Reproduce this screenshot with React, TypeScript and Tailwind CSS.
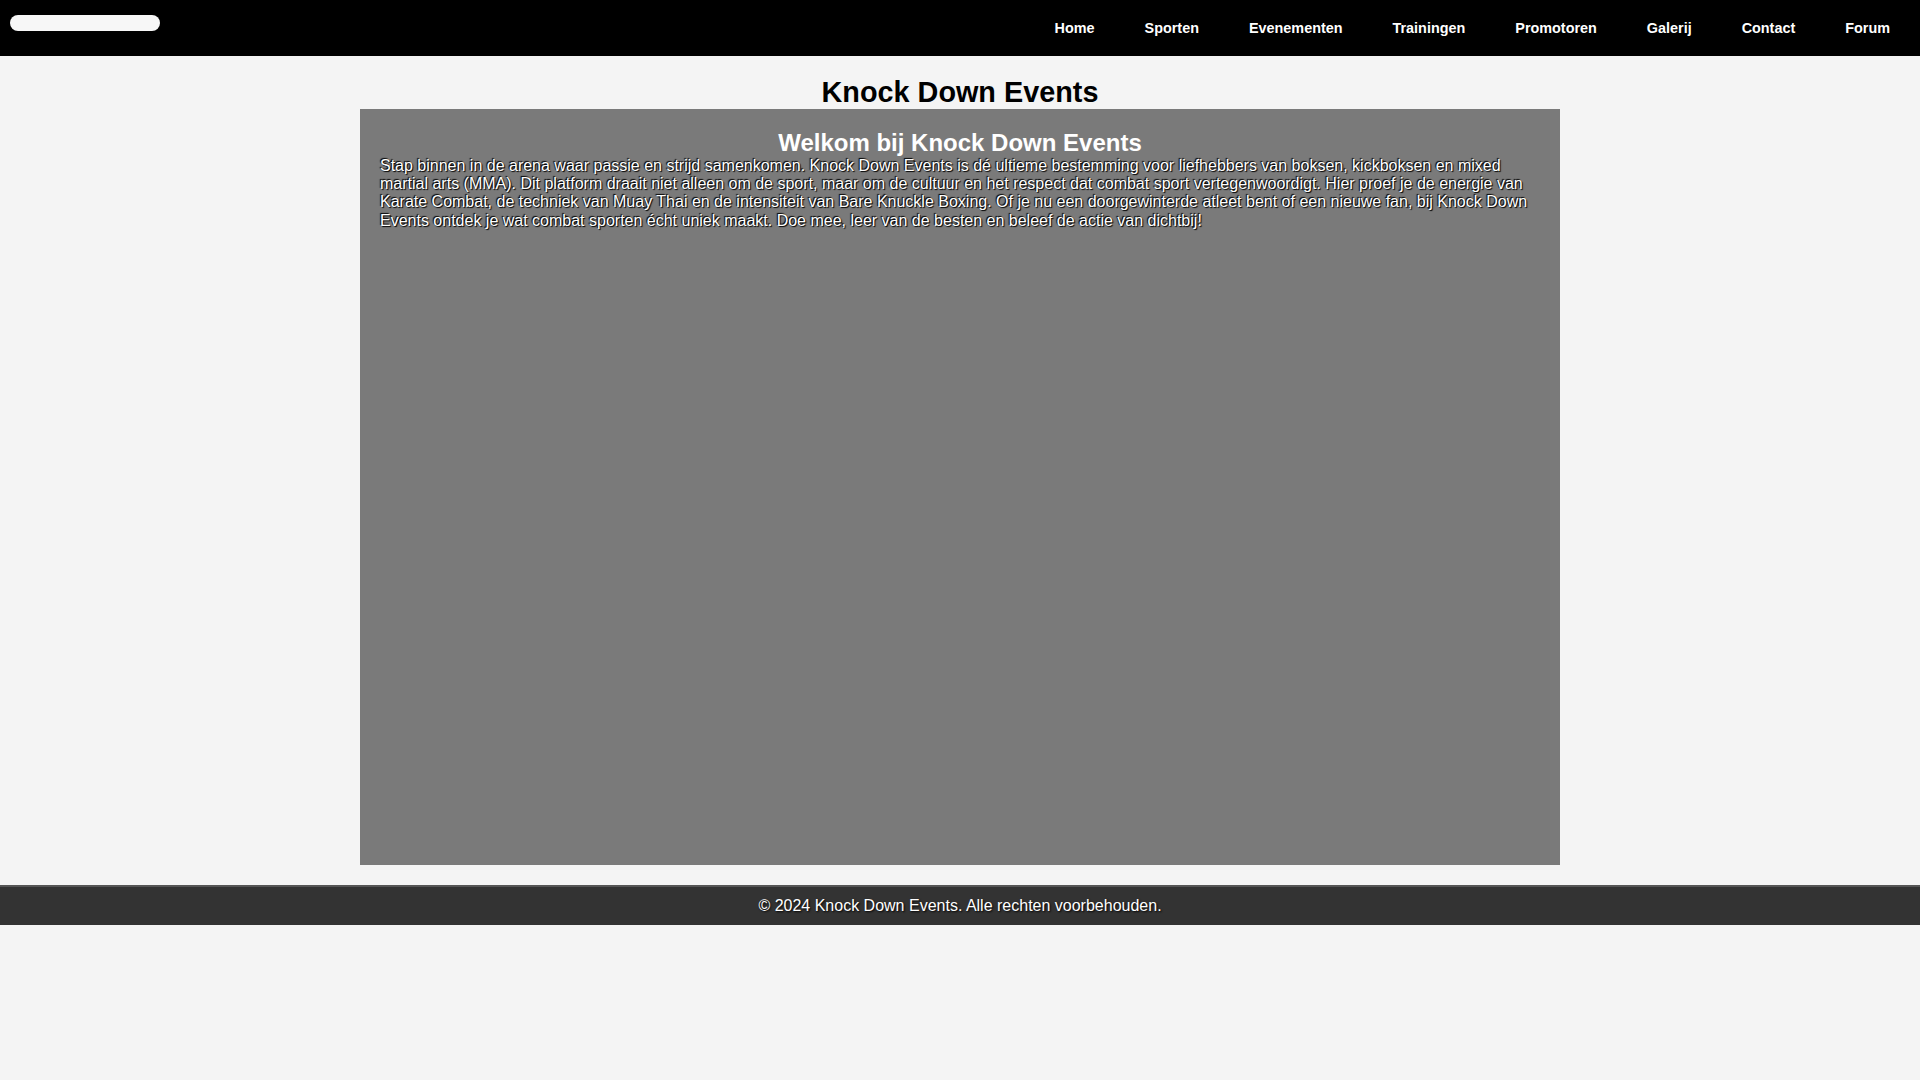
const NAV_ITEMS = ['Home', 'Sporten', 'Evenementen', 'Trainingen', 'Promotoren', 'Galerij', 'Contact', 'Forum'];

function Header() {
  return (
    <header className="flex h-[56px] items-center justify-between bg-black pl-[10px] pr-[30px]">
      <div className="h-[16px] w-[150px] -translate-y-[5px] rounded-full bg-[#f7f7f7]" />
      <nav className="flex translate-y-[1px] items-center gap-[50px]">
        {NAV_ITEMS.map((item) => (
          <a key={item} href="#" className="text-[14.4px] font-bold text-white">
            {item}
          </a>
        ))}
      </nav>
    </header>
  );
}

export default function App() {
  return (
    <div className="min-h-[1080px] bg-[#f4f4f4] font-['Liberation_Sans',Arial,sans-serif]">
      <Header />

      <main className="flex flex-col items-center">
        <h1 className="mt-[20px] text-[28.8px] font-bold leading-[1.149] text-black">Knock Down Events</h1>
        <section className="h-[756px] w-[1200px] bg-[#7a7a7a] p-[20px] text-white">
          <h2 className="text-center text-[24px] font-bold leading-[1.149]">Welkom bij Knock Down Events</h2>
          <p className="text-[16px] leading-[1.149] [text-shadow:_1px_1px_1px_#000,_-1px_-1px_1px_#000]">
            Stap binnen in de arena waar passie en strijd samenkomen. Knock Down Events is dé ultieme bestemming voor
            liefhebbers van boksen, kickboksen en mixed martial arts (MMA). Dit platform draait niet alleen om de sport,
            maar om de cultuur en het respect dat combat sport vertegenwoordigt. Hier proef je de energie van Karate
            Combat, de techniek van Muay Thai en de intensiteit van Bare Knuckle Boxing. Of je nu een doorgewinterde
            atleet bent of een nieuwe fan, bij Knock Down Events ontdek je wat combat sporten écht uniek maakt. Doe mee,
            leer van de besten en beleef de actie van dichtbij!
          </p>
        </section>
      </main>

      <footer className="mt-[20px] border-t-2 border-[#555555] bg-[#333333] py-[10px] text-center text-[16px] leading-[1.149] text-white [text-shadow:_1px_1px_2px_#000]">
        © 2024 Knock Down Events. Alle rechten voorbehouden.
      </footer>
    </div>
  );
}
